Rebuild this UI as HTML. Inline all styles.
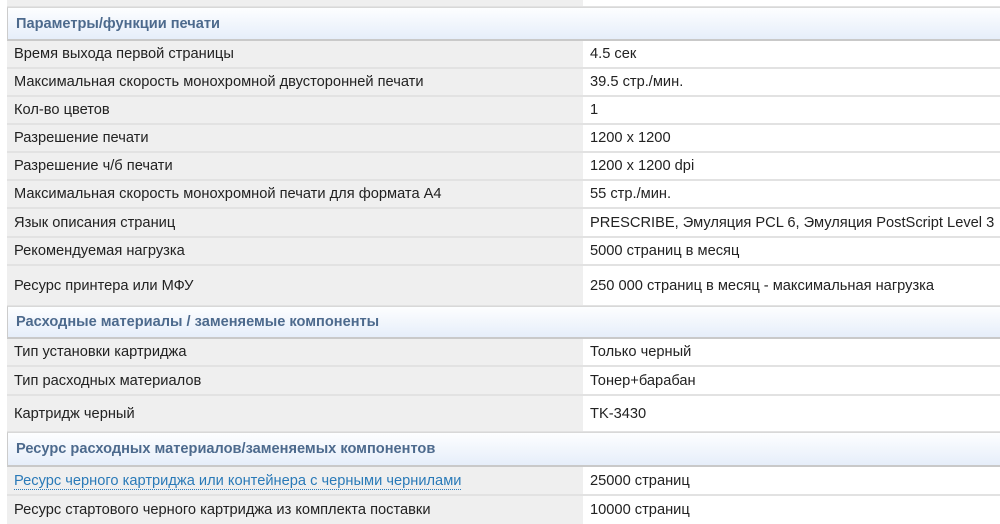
<!DOCTYPE html>
<html><head><meta charset="utf-8"><style>
*{margin:0;padding:0;box-sizing:border-box}
body{width:1000px;height:522px;overflow:hidden;background:#fff;font-family:"Liberation Sans",Arial,sans-serif;font-size:14.65px;color:#222;position:relative}
.r{position:absolute;left:7px;right:0;border-bottom:2px solid #e2e2e2}
.r .l{position:absolute;left:0;top:0;bottom:0;width:576px;background:#efefef;padding-left:7px}
.r .v{position:absolute;left:576px;right:0;top:0;bottom:0;background:#fff;padding-left:7px}
.r span{position:absolute;top:50%;transform:translateY(-50%);white-space:nowrap}
.h{position:absolute;left:7px;right:0;background:linear-gradient(#fdfeff,#e6eefa);border-left:1px solid #ccc;border-top:1px solid #d8d8d8;border-bottom:2px solid #c9c9c9;color:#4d6a8d;font-weight:bold;font-size:14.6px;padding-left:8px}
.h span{position:absolute;top:50%;transform:translateY(-50%)}
a{color:#2a7ab8;text-decoration:none;border-bottom:1px dotted #2a7ab8}
</style></head><body>
<div class="r" style="top:0;height:8px"><div class="l"></div><div class="v"></div></div>
<div class="h" style="top:7px;height:34px"><span>Параметры/функции печати</span></div>
<div class="r" style="top:41px;height:28px"><div class="l"><span>Время выхода первой страницы</span></div><div class="v"><span>4.5 сек</span></div></div>
<div class="r" style="top:69px;height:28px"><div class="l"><span>Максимальная скорость монохромной двусторонней печати</span></div><div class="v"><span>39.5 стр./мин.</span></div></div>
<div class="r" style="top:97px;height:28px"><div class="l"><span>Кол-во цветов</span></div><div class="v"><span>1</span></div></div>
<div class="r" style="top:125px;height:28px"><div class="l"><span>Разрешение печати</span></div><div class="v"><span>1200 x 1200</span></div></div>
<div class="r" style="top:153px;height:28px"><div class="l"><span>Разрешение ч/б печати</span></div><div class="v"><span>1200 x 1200 dpi</span></div></div>
<div class="r" style="top:181px;height:28px"><div class="l"><span>Максимальная скорость монохромной печати для формата А4</span></div><div class="v"><span>55 стр./мин.</span></div></div>
<div class="r" style="top:209px;height:29px"><div class="l"><span>Язык описания страниц</span></div><div class="v"><span>PRESCRIBE, Эмуляция PCL 6, Эмуляция PostScript Level 3</span></div></div>
<div class="r" style="top:238px;height:28px"><div class="l"><span>Рекомендуемая нагрузка</span></div><div class="v"><span>5000 страниц в месяц</span></div></div>
<div class="r" style="top:266px;height:41px"><div class="l"><span>Ресурс принтера или МФУ</span></div><div class="v"><span>250 000 страниц в месяц - максимальная нагрузка</span></div></div>
<div class="h" style="top:306px;height:33px"><span>Расходные материалы / заменяемые компоненты</span></div>
<div class="r" style="top:339px;height:28px"><div class="l"><span>Тип установки картриджа</span></div><div class="v"><span>Только черный</span></div></div>
<div class="r" style="top:367px;height:29px"><div class="l"><span>Тип расходных материалов</span></div><div class="v"><span>Тонер+барабан</span></div></div>
<div class="r" style="top:396px;height:37px"><div class="l"><span>Картридж черный</span></div><div class="v"><span>TK-3430</span></div></div>
<div class="h" style="top:432px;height:35px"><span>Ресурс расходных материалов/заменяемых компонентов</span></div>
<div class="r" style="top:467px;height:29px"><div class="l"><span><a>Ресурс черного картриджа или контейнера с черными чернилами</a></span></div><div class="v"><span>25000 страниц</span></div></div>
<div class="r" style="top:496px;height:28px;border-bottom:0"><div class="l"><span>Ресурс стартового черного картриджа из комплекта поставки</span></div><div class="v"><span>10000 страниц</span></div></div>
</body></html>
